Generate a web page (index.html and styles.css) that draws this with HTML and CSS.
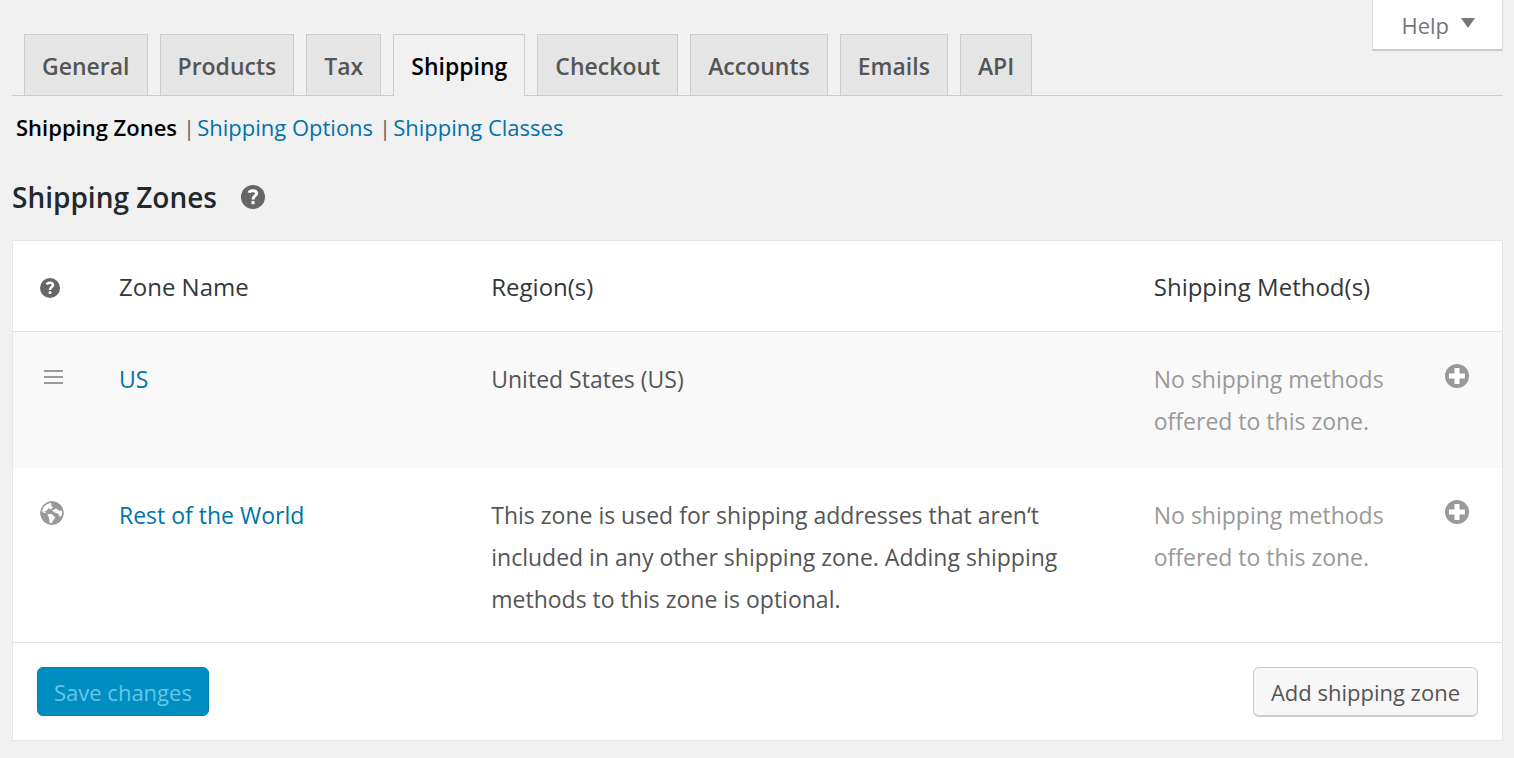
FILE: index.html
```html
<!DOCTYPE html>
<html lang="en">
<head>
    <meta charset="UTF-8">
    <meta name="viewport" content="width=device-width, initial-scale=1.0">
    <title>Shipping Zones</title>
    <link rel="stylesheet" href="styles.css">
</head>
<body>
    <!-- shared icons -->
    <svg class="icon-defs" aria-hidden="true">
        <symbol id="icon-help" viewBox="0 0 24 24">
            <circle cx="12" cy="12" r="12" fill="#666"/>
            <path d="M8 7.800C9 5 15.400 4.800 15.600 8.400C15.700 11 12 10.900 12 14.400" fill="none" stroke="#fff" stroke-width="3"/>
            <rect x="10.400" y="16" width="3.300" height="3.300" rx="1" fill="#fff"/>
        </symbol>
        <symbol id="icon-plus" viewBox="0 0 24 24">
            <circle cx="12" cy="12" r="12" fill="#999"/>
            <path d="M12 4v16M4 12h16" stroke="#fff" stroke-width="5"/>
        </symbol>
    </svg>

    <header class="page-header">
        <nav class="tabs">
            <a class="tab" href="#general">General</a>
            <a class="tab" href="#products">Products</a>
            <a class="tab" href="#tax">Tax</a>
            <a class="tab tab-active" href="#shipping">Shipping</a>
            <a class="tab" href="#checkout">Checkout</a>
            <a class="tab" href="#accounts">Accounts</a>
            <a class="tab" href="#emails">Emails</a>
            <a class="tab" href="#api">API</a>
        </nav>
        <button type="button" class="help-button">Help <span class="help-arrow"></span></button>
    </header>

    <ul class="sub-nav">
        <li><a class="current" href="#zones">Shipping Zones</a></li>
        <li><a href="#options">Shipping Options</a></li>
        <li><a href="#classes">Shipping Classes</a></li>
    </ul>

    <main>
        <h1 class="title">Shipping Zones <svg class="icon"><use href="#icon-help"/></svg></h1>

        <div class="panel">
            <table class="zones">
                <colgroup>
                    <col class="col-sort">
                    <col class="col-name">
                    <col class="col-region">
                    <col class="col-methods">
                </colgroup>
                <thead>
                    <tr>
                        <th class="cell-icon"><svg class="icon icon-small"><use href="#icon-help"/></svg></th>
                        <th>Zone Name</th>
                        <th>Region(s)</th>
                        <th>Shipping Method(s)</th>
                    </tr>
                </thead>
                <tbody>
                    <tr class="row-zone">
                        <td class="cell-icon">
                            <svg class="icon" viewBox="0 0 24 24">
                                <path d="M4 6h19M4 12h19M4 18h19" stroke="#999" stroke-width="2"/>
                            </svg>
                        </td>
                        <td><a href="#us">US</a></td>
                        <td>United States (US)</td>
                        <td>
                            <div class="methods">
                                <span>No shipping methods offered to this zone.</span>
                                <button type="button" class="add-method" aria-label="Add shipping method"><svg class="icon"><use href="#icon-plus"/></svg></button>
                            </div>
                        </td>
                    </tr>
                    <tr class="row-world">
                        <td class="cell-icon">
                            <svg class="icon" viewBox="0 0 24 24">
                                <circle cx="12" cy="12" r="11.500" fill="#999"/>
                                <path d="M2 9.500C3.200 5 6.500 2.300 11 1.800L11.500 5L13 6.500L10.500 8.500L8.500 7L7.500 9L4.500 10.500L7 12.500L3 11.500Z" fill="#fff"/>
                                <path d="M7.500 13L11.500 13L15.500 16.500L13 19.500L11.500 22.500L9.500 21.500L9.300 18Z" fill="#fff"/>
                                <path d="M12 9.500L14.500 11.500L18 12.500L20 16L22.500 13.500L22.600 10L19 9.500L16 7.500Z" fill="#fff"/>
                                <circle cx="12" cy="12" r="11" fill="none" stroke="#999" stroke-width="1.300"/>
                            </svg>
                        </td>
                        <td><a href="#world">Rest of the World</a></td>
                        <td>This zone is used for shipping addresses that aren‘t included in any other shipping zone. Adding shipping methods to this zone is optional.</td>
                        <td>
                            <div class="methods">
                                <span>No shipping methods offered to this zone.</span>
                                <button type="button" class="add-method" aria-label="Add shipping method"><svg class="icon"><use href="#icon-plus"/></svg></button>
                            </div>
                        </td>
                    </tr>
                </tbody>
            </table>
            <div class="panel-footer">
                <button type="button" class="button button-primary" disabled>Save changes</button>
                <button type="button" class="button">Add shipping zone</button>
            </div>
        </div>
    </main>
</body>
</html>
```
FILE: styles.css
```css
* {
    box-sizing: border-box;
}

body {
    margin: 0;
    padding: 0 11px 16px 12px;
    font-family: "Segoe UI", "Open Sans", "Noto Sans", sans-serif;
    font-size: 23px;
    color: #555;
    background-color: #f1f1f1;
}

a {
    color: #0073aa;
    text-decoration: none;
}

button {
    font-family: inherit;
    cursor: pointer;
}

.icon-defs {
    display: none;
}

.icon {
    display: block;
    width: 24px;
    height: 24px;
}

.icon-small {
    width: 20px;
    height: 20px;
}

.page-header {
    display: flex;
    justify-content: space-between;
    align-items: flex-start;
    border-bottom: 1px solid #ccc;
}

.tabs {
    display: flex;
    gap: 12px;
    padding: 34px 0 0 12px;
}

.tab {
    padding: 13px 17px 11px;
    border: 1px solid #ccc;
    border-bottom: none;
    background-color: #e5e5e5;
    color: #555;
    font-weight: 600;
    line-height: 36px;
}

.tab-active {
    margin-bottom: -1px;
    background-color: #f1f1f1;
    color: #000;
}

.help-button {
    display: flex;
    align-items: center;
    gap: 12px;
    height: 51px;
    padding: 0 27px 0 28px;
    border: 1px solid #ddd;
    border-top: none;
    border-bottom: 2px solid #ccc;
    background-color: #fff;
    color: #72777c;
    font-size: 22px;
}

.help-arrow {
    border: 7px solid transparent;
    border-top: 10px solid #72777c;
    border-bottom: none;
    margin-bottom: 4px;
}

.sub-nav {
    display: flex;
    margin: 15px 0 0;
    padding: 0 4px;
    list-style: none;
    font-size: 22px;
    line-height: 32px;
}

.sub-nav li + li::before {
    content: "|";
    margin: 0 2px 0 6px;
    color: #666;
}

.sub-nav .current {
    color: #000;
    font-weight: 600;
}

.title {
    display: flex;
    align-items: center;
    gap: 24px;
    margin: 34px 0 23px;
    color: #23282d;
    font-size: 28px;
    font-weight: 600;
    line-height: 40px;
}

.panel {
    border: 1px solid #e5e5e5;
    background-color: #fff;
}

.zones {
    width: 100%;
    table-layout: fixed;
    border-collapse: collapse;
    line-height: 42px;
}

.col-sort {
    width: 82px;
}

.col-name,
.col-methods {
    width: 25%;
}

.zones th,
.zones td {
    padding: 26px 24px;
    text-align: left;
    vertical-align: top;
}

.zones th {
    padding-top: 25px;
    padding-bottom: 23px;
    border-bottom: 1px solid #e1e1e1;
    color: #32373c;
    font-size: 24px;
    font-weight: 400;
}

.row-zone {
    background-color: #f9f9f9;
}

.zones .row-world td {
    padding-bottom: 22px;
}

.zones .cell-icon {
    padding-left: 27px;
    padding-top: 33px;
}

.zones th.cell-icon {
    padding-top: 37px;
}

.methods {
    display: flex;
    justify-content: space-between;
    align-items: flex-start;
    gap: 24px;
    padding-right: 9px;
    color: #999;
}

.add-method {
    flex: none;
    padding: 6px 0;
    border: none;
    background: none;
}

.panel-footer {
    display: flex;
    justify-content: space-between;
    align-items: flex-start;
    padding: 24px 24px 23px;
    border-top: 1px solid #e1e1e1;
}

.button {
    height: 50px;
    padding: 0 17px;
    border: 1px solid #ccc;
    border-bottom-width: 2px;
    border-radius: 6px;
    background-color: #f7f7f7;
    color: #555;
    font-size: 22px;
}

.button-primary {
    height: 49px;
    padding: 0 16px;
    border: 1px solid #007cb2;
    background-color: #008ec2;
    color: #66c6e4;
    cursor: default;
}
```
